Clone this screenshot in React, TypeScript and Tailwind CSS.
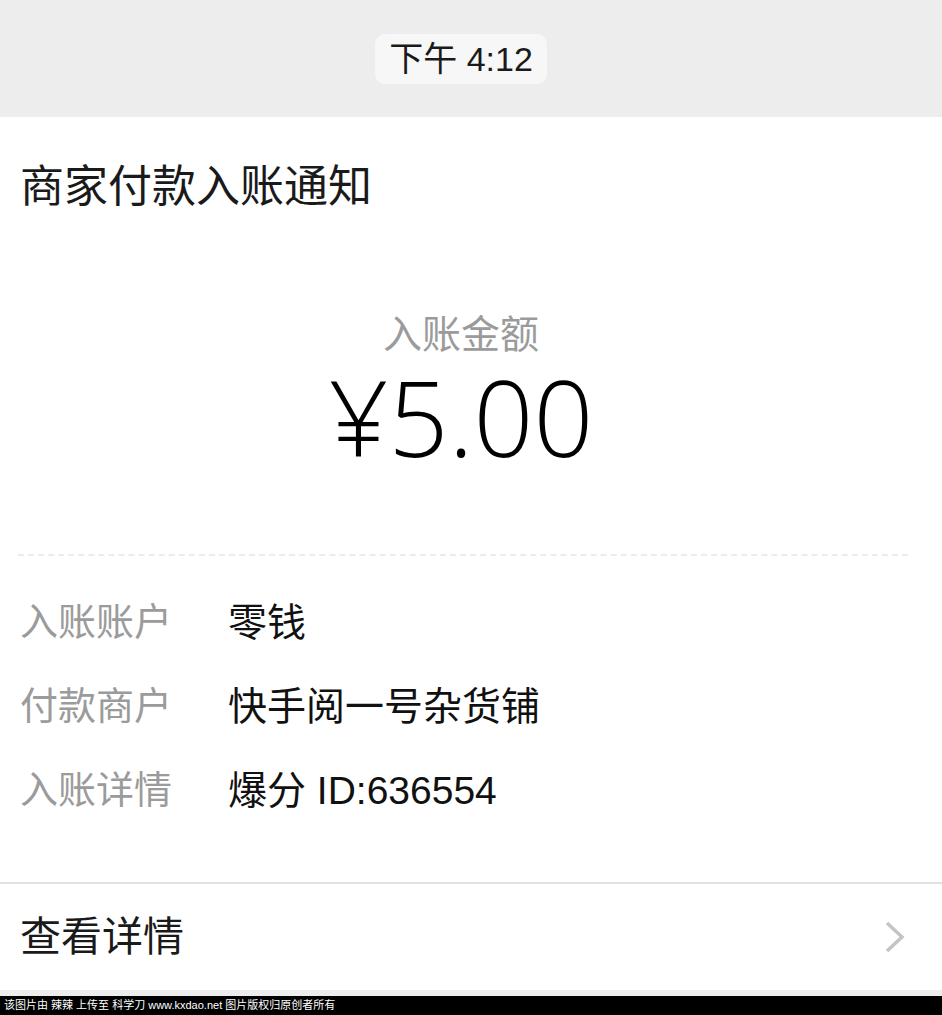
import React from 'react';

const rows = [
  { label: '入账账户', value: '零钱' },
  { label: '付款商户', value: '快手阅一号杂货铺' },
  { label: '入账详情', value: '爆分 ID:636554' },
];

const font = { fontFamily: '"Liberation Sans", "Noto Sans CJK SC", sans-serif' };

export default function App() {
  return (
    <div className="w-[942px] h-[1015px] flex flex-col bg-[#ededed] overflow-hidden" style={font}>
      {/* ── Timestamp ─────────────────────────────── */}
      <div className="h-[117px] flex items-center justify-center shrink-0 pr-[20px]">
        <div className="h-[50px] px-[14px] rounded-[10px] bg-[#f7f7f7] flex items-center text-[34px] leading-none text-[#1a1a1a]">
          下午 4:12
        </div>
      </div>

      {/* ── Notification card ─────────────────────── */}
      <div className="bg-white h-[873px] flex flex-col shrink-0">
        <div className="px-[20px] pt-[48px] text-[44px] leading-none text-[#1a1a1a]">商家付款入账通知</div>

        <div className="flex flex-col items-center pt-[106px] pr-[20px]">
          <div className="text-[39px] leading-none text-[#9b9b9b]">入账金额</div>
          <div
            className="mt-[10px] text-[105px] leading-none font-light text-black"
            style={{ fontFamily: '"Open Sans", "Liberation Sans", sans-serif' }}
          >
            ¥5.00
          </div>
        </div>

        <div className="ml-[18px] mr-[34px] mt-[85px] border-t-2 border-dashed border-[#ececec]" />

        <div className="px-[20px] pt-[46px] flex flex-col gap-[44px]">
          {rows.map((r) => (
            <div key={r.label} className="flex items-center h-[40px] text-[38px] leading-none">
              <span className="w-[208px] text-[#9b9b9b]">{r.label}</span>
              <span className="text-[#111] text-[39px]">{r.value}</span>
            </div>
          ))}
        </div>

        <div className="mt-auto border-t-2 border-[#e2e2e2] h-[108px] px-[20px] flex items-center justify-between">
          <span className="text-[41px] leading-none text-[#1a1a1a]">查看详情</span>
          <svg width="22" height="34" viewBox="0 0 22 34" className="mr-[16px]">
            <path d="M3 3 L18 17 L3 31" fill="none" stroke="#c4c4c4" strokeWidth="3.5" />
          </svg>
        </div>
      </div>

      {/* ── Watermark strip ───────────────────────── */}
      <div className="h-[6px] bg-[#ededed] shrink-0" />
      <div className="flex-1 bg-black flex items-center px-[4px] text-[11px] leading-none text-white">
        该图片由 辣辣 上传至 科学刀 www.kxdao.net 图片版权归原创者所有
      </div>
    </div>
  );
}
